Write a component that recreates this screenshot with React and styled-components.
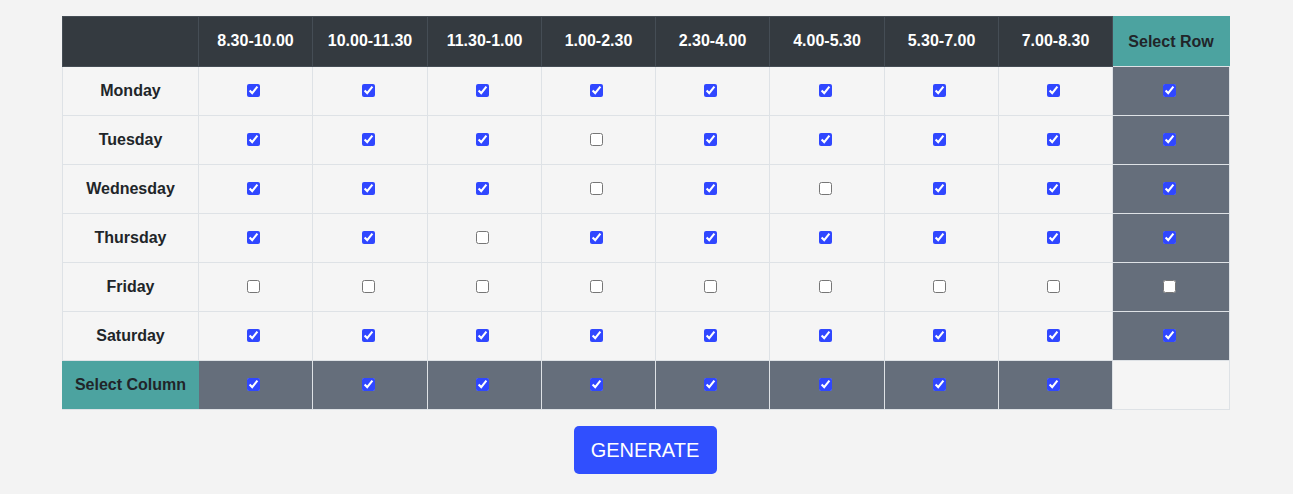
import React, { useState } from 'react';
import styled, { createGlobalStyle } from 'styled-components';

const slots = ['8.30-10.00', '10.00-11.30', '11.30-1.00', '1.00-2.30', '2.30-4.00', '4.00-5.30', '5.30-7.00', '7.00-8.30'];
const days = ['Monday', 'Tuesday', 'Wednesday', 'Thursday', 'Friday', 'Saturday'];
const widths = [136, 114, 115, 114, 114, 114, 115, 114, 114, 117];

const initial = [
  [1, 1, 1, 1, 1, 1, 1, 1],
  [1, 1, 1, 0, 1, 1, 1, 1],
  [1, 1, 1, 0, 1, 0, 1, 1],
  [1, 1, 0, 1, 1, 1, 1, 1],
  [0, 0, 0, 0, 0, 0, 0, 0],
  [1, 1, 1, 1, 1, 1, 1, 1],
].map((r) => r.map(Boolean));

const initialRows = [true, true, true, true, false, true];

function App() {
  const [grid, setGrid] = useState(initial);
  const [rowSel, setRowSel] = useState(initialRows);
  const [colSel, setColSel] = useState(slots.map(() => true));

  const toggle = (d, s) =>
    setGrid((g) => g.map((r, i) => (i === d ? r.map((v, j) => (j === s ? !v : v)) : r)));

  const toggleRow = (d) => {
    const next = !rowSel[d];
    setRowSel((r) => r.map((v, i) => (i === d ? next : v)));
    setGrid((g) => g.map((r, i) => (i === d ? r.map(() => next) : r)));
  };

  const toggleCol = (s) => {
    const next = !colSel[s];
    setColSel((c) => c.map((v, j) => (j === s ? next : v)));
    setGrid((g) => g.map((r) => r.map((v, j) => (j === s ? next : v))));
  };

  return (
    <>
      <GlobalStyle />
      <Page>
        <Table>
          <colgroup>
            {widths.map((w, i) => (
              <col key={i} style={{ width: w }} />
            ))}
          </colgroup>
          <thead>
            <tr>
              <HeadCell />
              {slots.map((s) => (
                <HeadCell key={s}>{s}</HeadCell>
              ))}
              <AccentCell as="th">Select Row</AccentCell>
            </tr>
          </thead>
          <tbody>
            {days.map((day, d) => (
              <tr key={day}>
                <DayCell>{day}</DayCell>
                {slots.map((s, j) => (
                  <Cell key={s}>
                    <Check checked={grid[d][j]} onChange={() => toggle(d, j)} />
                  </Cell>
                ))}
                <Cell $muted>
                  <Check checked={rowSel[d]} onChange={() => toggleRow(d)} />
                </Cell>
              </tr>
            ))}
            <tr>
              <AccentCell>Select Column</AccentCell>
              {slots.map((s, j) => (
                <Cell key={s} $muted>
                  <Check checked={colSel[j]} onChange={() => toggleCol(j)} />
                </Cell>
              ))}
              <Cell />
            </tr>
          </tbody>
        </Table>
        <GenerateButton>GENERATE</GenerateButton>
      </Page>
    </>
  );
}

export default App;

const Check = (props) => <CheckInput type="checkbox" {...props} />;

const GlobalStyle = createGlobalStyle`
  html, body {
    margin: 0;
    padding: 0;
    background: #f3f3f3;
    font-family: "Liberation Sans", Arial, Helvetica, sans-serif;
    color: #212529;
  }
`;

const Page = styled.div`
  display: flex;
  flex-direction: column;
  align-items: center;
  padding-top: 16px;
  padding-right: 1px;
`;

const Table = styled.table`
  width: 1167px;
  table-layout: fixed;
  border-collapse: collapse;
  font-size: 16px;
`;

const HeadCell = styled.th`
  height: 48px;
  padding: 0 8px 1px;
  background: #343a40;
  color: #ffffff;
  font-weight: bold;
  text-align: center;
  vertical-align: middle;
  border: 1px solid #454d55;
`;

const AccentCell = styled.td`
  height: 48px;
  padding: 0 8px;
  background: #4ca3a0;
  color: #212529;
  font-weight: bold;
  text-align: center;
  vertical-align: middle;
  border: 1px solid #4ca3a0;
  border-bottom-color: #dee2e6;
`;

const DayCell = styled.td`
  height: 48px;
  padding: 0 8px;
  background: #f5f5f5;
  font-weight: bold;
  text-align: center;
  vertical-align: middle;
  border: 1px solid #dee2e6;
`;

const Cell = styled.td`
  height: 48px;
  padding: 0;
  background: ${({ $muted }) => ($muted ? '#656e7b' : '#f5f5f5')};
  text-align: center;
  vertical-align: middle;
  border: 1px solid #dee2e6;
`;

const CheckInput = styled.input`
  width: 13px;
  height: 13px;
  margin: 0 4px 0 0;
  accent-color: #3047ff;
  cursor: pointer;
  vertical-align: middle;
  position: relative;
  top: -1px;
`;

const GenerateButton = styled.button`
  margin: 16px 2px 0 0;
  width: 143px;
  height: 48px;
  border: none;
  border-radius: 5px;
  background: #304ffe;
  color: #ffffff;
  font-family: "Liberation Sans", Arial, Helvetica, sans-serif;
  font-size: 20px;
  letter-spacing: 0;
  cursor: pointer;
`;
